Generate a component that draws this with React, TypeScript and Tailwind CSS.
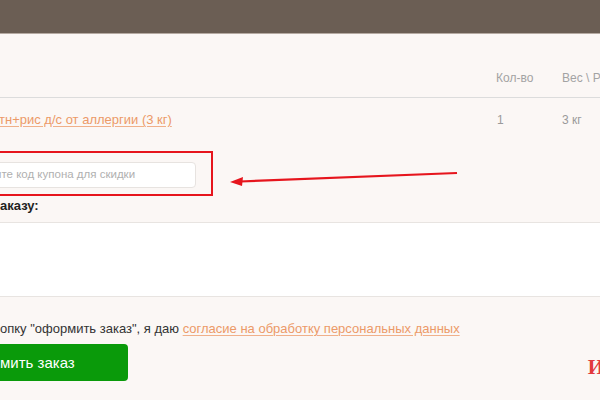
import React from 'react';

// Cart fragment: order table, coupon field with annotation, consent and submit
const App: React.FC = () => {
  return (
    <div
      className="relative w-[600px] h-[400px] overflow-hidden bg-[#fbf7f5] text-[#333]"
      style={{ fontFamily: '"Liberation Sans", Arial, sans-serif' }}
    >
      {/* top bar */}
      <div className="h-[34px] bg-[#6b5e54] border-b border-[#b5aaa2]" />

      {/* table header */}
      <div className="h-[64px] grid grid-cols-[496px_66px_1fr] items-end pb-[12px] border-b border-[#dcdcdc] text-[12px] leading-[14px] text-[#a3a3a3]">
        <div />
        <div>Кол-во</div>
        <div className="whitespace-nowrap">Вес \ Ра</div>
      </div>

      {/* product row */}
      <div className="h-[43px] grid grid-cols-[496px_66px_1fr] pt-[14px] text-[12px] leading-[16px] text-[#9a9a9a]">
        <a href="#" className="whitespace-nowrap text-[13px] text-[#ec9a68] underline underline-offset-2 decoration-[#f0b08a] -ml-px">
          тн+рис д/с от аллергии (3 кг)
        </a>
        <div className="pl-px">1</div>
        <div>3 кг</div>
      </div>

      {/* coupon field, marked with a red frame */}
      <div className="mt-[10px] -ml-[30px] w-[243px] h-[45px] border-2 border-[#e6151d] pt-[9px] pr-[15px]">
        <div className="h-[26px] bg-white border border-[#e7e3e0] rounded-[4px] flex items-center pl-[22px] text-[11.5px] text-[#b0b0b0] whitespace-nowrap overflow-hidden">
          ите код купона для скидки
        </div>
      </div>

      <div className="h-[26px] pt-[2px] text-[13px] leading-[16px] font-bold text-[#222]">аказу:</div>

      {/* comment area */}
      <div className="h-[75px] bg-white border-y border-[#e8e4e1]" />

      {/* consent */}
      <div className="pt-[24px] text-[13px] leading-[16px] whitespace-nowrap text-[#333]">
        опку "оформить заказ", я даю{' '}
        <a href="#" className="text-[#ec9a68] underline underline-offset-2 decoration-[#f0b08a]">
          согласие на обработку персональных данных
        </a>
      </div>

      <div className="mt-[5px] flex items-center justify-between">
        <button
          type="button"
          className="-ml-[40px] w-[168px] h-[37px] rounded-[4px] bg-[#0a9a0a] text-white text-[15px] text-left pl-[40px]"
        >
          мить заказ
        </button>
        <div
          className="mr-[-4px] mt-[10px] text-[21px] font-bold text-[#e2393c]"
          style={{ fontFamily: '"Liberation Serif", "Times New Roman", serif' }}
        >
          И
        </div>
      </div>

      {/* annotation arrow */}
      <svg className="absolute left-0 top-0 pointer-events-none" width="600" height="400">
        <line x1="457" y1="173" x2="240" y2="181.5" stroke="#e6151d" strokeWidth="2.2" />
        <polygon points="230,182 243,177 242,186" fill="#e6151d" />
      </svg>
    </div>
  );
};

export default App;
